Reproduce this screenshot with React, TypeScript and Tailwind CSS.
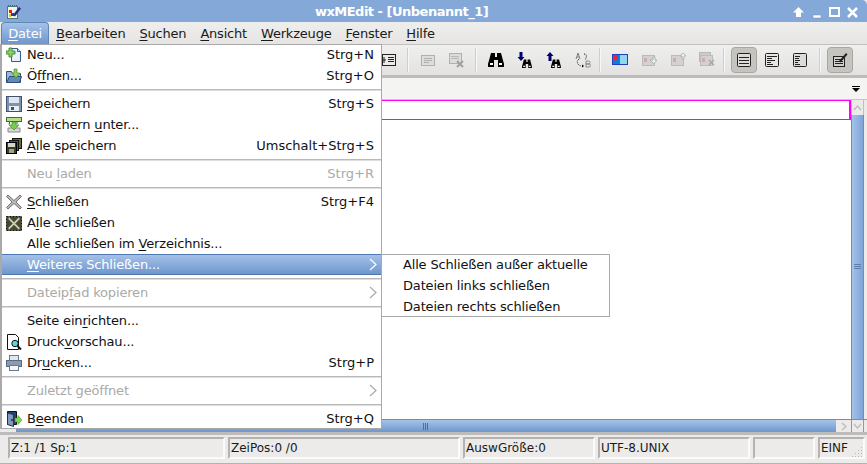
import type { ReactNode } from "react";

type Row =
  | { sep: true }
  | { sep?: false; label: string; u?: number; n?: number; keys?: string; icon?: ReactNode; off?: boolean; arrow?: boolean; on?: boolean };

function Mn({ text, u, n = 1 }: { text: string; u?: number; n?: number }) {
  if (u === undefined) return <span>{text}</span>;
  return (
    <span>
      {text.slice(0, u)}
      <span className="underline underline-offset-2">{text.slice(u, u + n)}</span>
      {text.slice(u + n)}
    </span>
  );
}

function Ico({ children, w = 16, h = 16 }: { children: ReactNode; w?: number; h?: number }) {
  return (
    <svg width={w} height={h} viewBox={`0 0 ${w} ${h}`} className="block shrink-0">
      {children}
    </svg>
  );
}

const NewIcon = (
  <Ico>
    <path d="M5.500 1.500h6l3 3v10h-9z" fill="#e8f0fa" stroke="#2f5f9a" />
    <path d="M11.500 1.500v3h3" fill="#bcd2ee" stroke="#2f5f9a" />
    <path d="M3 1h3v3h3v3H6v3H3V7H0V4h3z" fill="#8fd05a" stroke="#2f7a2a" strokeWidth="0.8" />
  </Ico>
);
const OpenIcon = (
  <Ico>
    <path d="M.5 3.500h5l1 2h8v9H.5z" fill="#9ab8d8" stroke="#2e4f78" />
    <path d="M.5 14.500l3-6h12l-2 6z" fill="#5f8ab8" stroke="#2e4f78" />
    <path d="M8 1h3v4h3l-4 5-4-5h2z" fill="#8fd05a" stroke="#4c8a2c" strokeWidth="0.7" />
  </Ico>
);
const SaveIcon = (
  <Ico>
    <rect x="0.500" y="0.500" width="15" height="15" fill="#7f93ad" stroke="#3f5270" />
    <rect x="3" y="1" width="10" height="6" fill="#dfe6ee" />
    <rect x="3" y="10" width="10" height="5" fill="#e8eef5" />
    <rect x="5" y="11" width="3" height="3" fill="#3f5270" />
  </Ico>
);
const SaveAsIcon = (
  <Ico>
    <rect x="0.500" y="0.500" width="15" height="4" fill="#b4e08a" stroke="#2f7a2a" />
    <path d="M3.500 4v3h-1M11 4v3" stroke="#2f7a2a" fill="none" />
    <path d="M2 11h12v4H2z" fill="#d8d8d8" stroke="#8a8a8a" />
    <path d="M6 5h4v3h3l-5 5-5-5h3z" fill="#7ccb52" stroke="#3f8f2a" strokeWidth="0.7" />
  </Ico>
);
const SaveAllIcon = (
  <Ico>
    <rect x="6.500" y="0.500" width="9" height="10" fill="#6b6b3a" stroke="#111" />
    <rect x="3.500" y="2.500" width="9" height="10" fill="#55552e" stroke="#111" />
    <rect x="0.500" y="4.500" width="10" height="11" fill="#3d3d22" stroke="#000" />
    <rect x="2" y="5" width="7" height="4" fill="#d5d5c8" />
    <rect x="3" y="11" width="5" height="4" fill="#a0a090" />
  </Ico>
);
const CloseIcon = (
  <Ico>
    <path d="M2 1l6 5.500L14 1l1.500 1.500L10 8l5.500 5.500L14 15 8 9.500 2 15 .5 13.500 6 8 .5 2.500z" fill="#b8b8b8" stroke="#5a5a5a" strokeWidth="0.8" />
  </Ico>
);
const CloseAllIcon = (
  <Ico>
    <rect x="0.500" y="1.500" width="15" height="14" fill="#4a4a20" stroke="#111" strokeDasharray="2 1" />
    <path d="M3 2l5 5 5-5 1 2-4.500 4.500L14 13l-1 2-5-5-5 5-1-2 4.500-4.500L2 4z" fill="#c8c8c8" stroke="#555" strokeWidth="0.5" />
  </Ico>
);
const PreviewIcon = (
  <Ico>
    <path d="M1.500.5h8l3 3v12h-11z" fill="#fff" stroke="#111" />
    <circle cx="9" cy="9.500" r="3.200" fill="#5cd6e0" stroke="#111" />
    <path d="M11.500 12l3.500 3.500" stroke="#111" strokeWidth="2" />
  </Ico>
);
const PrintIcon = (
  <Ico>
    <rect x="3.500" y="0.500" width="9" height="5" fill="#e4e8ee" stroke="#6a7a90" />
    <rect x="0.500" y="5.500" width="15" height="6" fill="#8a9ab0" stroke="#5a6a80" />
    <rect x="3.500" y="10.500" width="9" height="5" fill="#f5f5f5" stroke="#6a7a90" />
  </Ico>
);
const ExitIcon = (
  <Ico>
    <path d="M1.500.5h9v13h-9z" fill="#27426a" stroke="#111" />
    <path d="M1.500 2l6 1.500v12l-6-2z" fill="#7a9cc4" stroke="#1c3355" />
    <rect x="5" y="8" width="2" height="2" fill="#a01818" />
    <path d="M9 7h3V4.500L16 9l-4 4.500V11H9z" fill="#83d65a" stroke="#3f8f2a" strokeWidth="0.6" />
  </Ico>
);

const rows: Row[] = [
  { label: "Neu...", keys: "Strg+N", icon: NewIcon },
  { label: "Öffnen...", u: 1, n: 2, keys: "Strg+O", icon: OpenIcon },
  { sep: true },
  { label: "Speichern", u: 0, keys: "Strg+S", icon: SaveIcon },
  { label: "Speichern unter...", u: 10, icon: SaveAsIcon },
  { label: "Alle speichern", u: 0, keys: "Umschalt+Strg+S", icon: SaveAllIcon },
  { sep: true },
  { label: "Neu laden", u: 4, keys: "Strg+R", off: true },
  { sep: true },
  { label: "Schließen", u: 0, keys: "Strg+F4", icon: CloseIcon },
  { label: "Alle schließen", u: 1, icon: CloseAllIcon },
  { label: "Alle schließen im Verzeichnis...", u: 18 },
  { label: "Weiteres Schließen...", u: 0, arrow: true, on: true },
  { sep: true },
  { label: "Dateipfad kopieren", u: 6, arrow: true, off: true },
  { sep: true },
  { label: "Seite einrichten...", u: 9 },
  { label: "Druckvorschau...", u: 5, icon: PreviewIcon },
  { label: "Drucken...", u: 2, keys: "Strg+P", icon: PrintIcon },
  { sep: true },
  { label: "Zuletzt geöffnet", arrow: true, off: true },
  { sep: true },
  { label: "Beenden", u: 1, keys: "Strg+Q", icon: ExitIcon },
];

const menus: [string, number][] = [
  ["Bearbeiten", 0],
  ["Suchen", 0],
  ["Ansicht", 0],
  ["Werkzeuge", 0],
  ["Fenster", 0],
  ["Hilfe", 0],
];

function Binoculars({ x = 0, y = 0, s = 1 }: { x?: number; y?: number; s?: number }) {
  return (
    <g transform={`translate(${x} ${y}) scale(${s})`} fill="#000">
      <path d="M3 1h4v4h2V1h4l3 11v3h-6V8H6v7H0v-3z" />
      <path d="M2 11h3v2H2zM11 11h3v2h-3z" fill="#fff" />
    </g>
  );
}

function Sep() {
  return <div className="w-[2px] h-[24px] bg-[#cfcfcf] border-r border-[#f7f7f7]" />;
}

function ToolBtn({ children, w, on }: { children: ReactNode; w: string; on?: boolean }) {
  return (
    <div
      className={
        on
          ? `${w} flex items-center justify-center h-[26px] rounded-[4px] border border-[#a8a6a0] bg-[#c6c4bf]`
          : `${w} flex items-center justify-center h-[26px]`
      }
    >
      {children}
    </div>
  );
}

function Lines({ lines, fill }: { lines: number[][]; fill: string }) {
  return (
    <Ico>
      <rect x="1.500" y="1.500" width="13" height="13" rx="1" fill={fill} stroke="#222" />
      {lines.map((l, i) => (
        <path key={i} d={`M${l[0]} ${l[2]}.500h${l[1] - l[0]}`} stroke="#222" />
      ))}
    </Ico>
  );
}

function Pane({ children, w }: { children?: ReactNode; w: string }) {
  return (
    <div className={`${w} relative h-[22px] border-2 border-t-[#b4b3b0] border-l-[#b4b3b0] border-b-[#fbfbfb] border-r-[#fbfbfb] bg-[#ecebe9] pl-[1px] flex items-center text-[12px] leading-none text-[#1a1a1a] whitespace-nowrap overflow-hidden`}>
      {children}
    </div>
  );
}

export default function App() {
  return (
    <div className="relative w-[867px] h-[464px] overflow-hidden flex flex-col bg-[#ecebe9] font-['DejaVu_Sans',sans-serif] text-[13px] text-[#111]">
      {/* titlebar */}
      <div className="relative h-[22px] shrink-0 bg-[#84a9d8] rounded-tr-[5px] flex items-center pl-[6px] pr-[7px] pt-[2px]">
        <Ico w={16} h={16}>
          <rect x="1.500" y="2.500" width="10" height="12" fill="#f3f3e6" stroke="#4a7a7a" />
          <path d="M2 1.500h9" stroke="#3a6a7a" strokeDasharray="1 1" />
          <rect x="3" y="6" width="3" height="3" fill="#e02020" />
          <rect x="5" y="9" width="3" height="3" fill="#2040c0" />
          <rect x="3" y="10" width="2" height="3" fill="#e8c020" />
          <path d="M7 11L13 3l2 1.500-6 8z" fill="#2a2a80" />
        </Ico>
        <div className="flex-1 text-center font-bold text-white text-[13px] tracking-[-0.5px] pr-[10px]">wxMEdit - [Unbenannt_1]</div>
        <div className="flex items-center gap-[3px]">
          <Ico w={15} h={15}>
            <path d="M7.500 2l5.500 5.500H10V12H5V7.500H2z" fill="#fff" />
          </Ico>
          <Ico w={15} h={15}>
            <rect x="4" y="10" width="8" height="3" fill="#fff" stroke="#6f8fb8" strokeWidth="0.5" />
          </Ico>
          <Ico w={15} h={15}>
            <rect x="3" y="3" width="9" height="8" fill="none" stroke="#fff" strokeWidth="2" />
          </Ico>
          <Ico w={15} h={15}>
            <path d="M3 3l9 9M12 3l-9 9" stroke="#fff" strokeWidth="2.500" />
          </Ico>
        </div>
      </div>

      {/* menubar */}
      <div className="h-[23px] shrink-0 flex items-center pl-[1px] bg-gradient-to-b from-[#eeeeed] to-[#e6e5e3] border-b border-[#c0c0c0] leading-none tracking-[-0.2px]">
        <div className="w-[48px] h-[22px] flex items-center justify-center rounded-t-[4px] border border-[#5f87b8] border-b-0 bg-gradient-to-b from-[#a4c1e7] to-[#6f97cd] text-white">
          <Mn text="Datei" u={0} />
        </div>
        {menus.map(([m, u]) => (
          <div key={m} className="px-[7px] text-[#1a1a1a] first:ml-[1px]">
            <Mn text={m} u={u} />
          </div>
        ))}
      </div>

      {/* toolbar */}
      <div className="h-[33px] shrink-0 flex items-center pl-[376px] bg-gradient-to-b from-[#efefee] to-[#e3e2e0] border-b-[3px] border-[#bdbcba]">
        <ToolBtn w="w-[26px]">
          <Ico>
            <rect x="1.500" y="2.500" width="13" height="11" fill="#ecebe9" stroke="#222" />
            <path d="M7 5.500h6M7 7.500h6M7 9.500h6M3 5v6M2 8h3" stroke="#222" />
          </Ico>
        </ToolBtn>
        <div className="w-[5px]" />
        <Sep />
        <div className="w-[5px]" />
        <ToolBtn w="w-[28px]">
          <Ico>
            <rect x="1.500" y="3.500" width="13" height="10" fill="#ddd" stroke="#b0b0b0" />
            <path d="M4 6.500h8M4 8.500h8M4 10.500h5" stroke="#b0b0b0" />
          </Ico>
        </ToolBtn>
        <ToolBtn w="w-[28px]">
          <Ico>
            <rect x="1.500" y="1.500" width="12" height="10" fill="#ddd" stroke="#b0b0b0" />
            <path d="M3 4.500h8M3 6.500h8" stroke="#b8b8b8" />
            <path d="M9 9l6 6M15 9l-6 6" stroke="#a0a0a0" strokeWidth="2" />
          </Ico>
        </ToolBtn>
        <div className="w-[5px]" />
        <Sep />
        <div className="w-[4px]" />
        <ToolBtn w="w-[29px]">
          <Ico>
            <Binoculars />
          </Ico>
        </ToolBtn>
        <ToolBtn w="w-[29px]">
          <Ico>
            <path d="M2.500 0h3v5h2l-3.500 4L.5 5h2z" fill="#000070" />
            <Binoculars x={5} y={7} s={0.62} />
          </Ico>
        </ToolBtn>
        <ToolBtn w="w-[29px]">
          <Ico>
            <path d="M2.500 9h3V4h2L4 0 .5 4h2z" fill="#000070" />
            <Binoculars x={5} y={7} s={0.62} />
          </Ico>
        </ToolBtn>
        <ToolBtn w="w-[29px]">
          <Ico>
            <path d="M4 7C1 9 2 13 6 14M9 2c3 0 3 3 1 6" fill="none" stroke="#222" strokeDasharray="1 1" />
            <path d="M7 12.500l2 1.500-2 1.500z" fill="#000" />
            <path d="M1 7l2-6 2 6M2 5h2" fill="none" stroke="#555" strokeWidth="0.7" />
            <path d="M11 9h2.500a1.500 1.500 0 0 1 0 3H11zM11 12h3a1.500 1.500 0 0 1 0 3h-3z" fill="none" stroke="#777" strokeWidth="0.8" />
          </Ico>
        </ToolBtn>
        <div className="w-[2px]" />
        <Sep />
        <div className="w-[4px]" />
        <ToolBtn w="w-[29px]">
          <Ico>
            <rect x="0.500" y="2.500" width="15" height="10" fill="#8fd8f0" stroke="#2040c0" />
            <rect x="1" y="3" width="7" height="9" fill="#0a7fd8" />
            <path d="M2 3h4v6L4 7.500 2 9z" fill="#f02040" />
          </Ico>
        </ToolBtn>
        {[
          "M9 8h3V5h2v3h2l-3 4z",
          "M13 1l3 3h-2v3h-2V4h-2z",
          "M10 8l5 5M15 8l-5 5",
        ].map((d, i) => (
          <ToolBtn key={i} w="w-[29px]">
            <Ico>
              {i === 2 && <rect x="0.500" y="0.500" width="11" height="9" fill="#ccc" stroke="#b8b8b8" />}
              <rect x="1.500" y="3.500" width="12" height="10" fill="#d2d2d2" stroke="#bbb" />
              <path d="M3 6h3v4H3z" fill="#cfaab0" />
              <path d={d} fill="#efefef" stroke="#a8a8a8" strokeWidth={i === 2 ? 1.500 : 0.800} />
            </Ico>
          </ToolBtn>
        ))}
        <div className="w-[2px]" />
        <Sep />
        <div className="w-[6px]" />
        <ToolBtn w="w-[26px]" on>
          <Lines fill="#dcdbd8" lines={[[3, 13, 5], [3, 13, 8], [3, 13, 11]]} />
        </ToolBtn>
        <div className="w-[1px]" />
        <ToolBtn w="w-[28px]">
          <Lines fill="#e6e5e3" lines={[[3, 13, 4], [3, 8, 6], [3, 11, 8], [3, 7, 10], [3, 9, 12]]} />
        </ToolBtn>
        <ToolBtn w="w-[28px]">
          <Lines fill="#dcdbd8" lines={[[3, 8, 4], [3, 7, 6], [3, 8, 8], [3, 6, 10], [3, 8, 12]]} />
        </ToolBtn>
        <div className="w-[5px]" />
        <Sep />
        <div className="w-[6px]" />
        <ToolBtn w="w-[26px]" on>
          <Ico>
            <rect x="1.500" y="4.500" width="11" height="10" fill="#d0cfcc" stroke="#222" />
            <path d="M3 7.500h8M3 9.500h8M3 11.500h8" stroke="#222" />
            <path d="M7 9l7-8 1.500 1.500-7 8z" fill="#222" />
          </Ico>
        </ToolBtn>
      </div>

      {/* tab strip */}
      <div className="h-[22px] shrink-0 bg-[#f4f4f3] border-b border-[#c8c8c8] flex items-center justify-end pr-[7px]">
        <Ico w={8} h={6}>
          <path d="M0 0h8v1H0zM0 2h8L4 6z" fill="#000" />
        </Ico>
      </div>

      {/* editor */}
      <div className="flex-1 min-h-0 flex bg-white">
        <div className="flex-1 min-w-0">
          <div className="h-[20px] border-y border-r-2 border-[#ff00ff]" />
        </div>
        <div className="w-[13px] flex flex-col shrink-0">
          <div className="h-[15px] bg-[#ecebe9] border-x border-[#c0c0c0] flex items-center justify-center">
            <Ico w={9} h={6}>
              <path d="M1 5l3.500-4L8 5" fill="none" stroke="#bbb" strokeWidth="1.300" />
            </Ico>
          </div>
          <div className="flex-1 border-x border-[#6f8fb8] bg-gradient-to-r from-[#a6c3e8] to-[#7ea4d8] flex items-center justify-center">
            <Ico w={7} h={6}>
              <path d="M0 .5h7M0 2.500h7M0 4.500h7" stroke="#5f7fa8" />
            </Ico>
          </div>
        </div>
        <div className="w-[3px] bg-[#ecebe9]" />
      </div>

      {/* horizontal scrollbar */}
      <div className="h-[13px] shrink-0 flex border-t border-[#6f8fb8] bg-white">
        <div className="w-[16px] bg-[#ecebe9]" />
        <div className="flex-1 bg-gradient-to-b from-[#a6c3e8] to-[#6f97cd] flex items-center justify-center">
          <Ico w={6} h={7}>
            <path d="M.5 0v7M2.500 0v7M4.500 0v7" stroke="#4f6f98" />
          </Ico>
        </div>
        <div className="w-[15px] bg-[#ecebe9] flex items-center justify-center">
          <Ico w={6} h={9}>
            <path d="M1 1l4 3.500L1 8" fill="none" stroke="#bbb" strokeWidth="1.300" />
          </Ico>
        </div>
        <div className="w-[13px] bg-[#ecebe9] flex items-center justify-center border-x border-[#8a9ab0]">
          <Ico w={9} h={6}>
            <path d="M1 1l3.500 4L8 1" fill="none" stroke="#bbb" strokeWidth="1.300" />
          </Ico>
        </div>
        <div className="w-[3px] bg-[#ecebe9]" />
      </div>

      {/* status bar */}
      <div className="h-[32px] shrink-0 bg-[#ecebe9] border-t-[3px] border-t-[#bdbcba] border-b border-b-[#9db5d6] flex items-start pt-[2px] pl-[8px] gap-[3px]">
        <Pane w="w-[217px]">Z:1 /1 Sp:1</Pane>
        <Pane w="w-[232px]">ZeiPos:0 /0</Pane>
        <Pane w="w-[132px]">AuswGröße:0</Pane>
        <Pane w="w-[152px]">UTF-8.UNIX</Pane>
        <Pane w="w-[62px]" />
        <Pane w="w-[47px]">
          EINF
          <svg width="12" height="12" viewBox="0 0 12 12" className="absolute right-0 bottom-0">
            <path d="M10 2h1v1h-1zM7 5h1v1H7zM10 5h1v1h-1zM4 8h1v1H4zM7 8h1v1H7zM10 8h1v1h-1zM1 11h1v1H1zM4 11h1v1H4zM7 11h1v1H7zM10 11h1v1h-1z" fill="#b8b8b4" />
          </svg>
        </Pane>
      </div>

      {/* open file menu */}
      <div className="absolute left-0 top-[44px] w-[382px] bg-white border-t border-b border-r border-l-2 border-[#a9a9a9] leading-none">
        <div className="-my-[1px]">
          {rows.map((r, i) =>
            r.sep ? (
              <div key={i} className="h-[7px] flex items-center">
                <div className="h-[2px] w-full bg-[#b9b9b9] border-b border-[#dedede]" />
              </div>
            ) : (
              <div
                key={i}
                className={
                  r.on
                    ? "h-[21px] flex items-center border-y border-[#4f79ae] bg-gradient-to-b from-[#a4c1e7] to-[#6f97cd] text-white"
                    : r.off
                      ? "h-[21px] flex items-center text-[#a9a9a9]"
                      : "h-[21px] flex items-center text-[#111]"
                }
              >
                <div className="w-[25px] pl-[4px] shrink-0">{r.icon}</div>
                <div className="flex-1 whitespace-nowrap tracking-[-0.17px]">
                  <Mn text={r.label} u={r.u} n={r.n} />
                </div>
                {r.keys && <div className="pr-[7px]">{r.keys}</div>}
                {r.arrow && (
                  <div className="pr-[3px]">
                    <Ico w={9} h={13}>
                      <path d="M1 1l6 5.500L1 12" fill="none" stroke={r.on ? "#ffffff" : "#aaaaaa"} strokeWidth="1.200" />
                    </Ico>
                  </div>
                )}
              </div>
            ),
          )}
        </div>
      </div>

      {/* submenu */}
      <div className="absolute left-[381px] top-[254px] w-[229px] bg-white border border-[#a9a9a9] leading-none text-[#111] tracking-[-0.17px]">
        <div className="-my-[1px]">
          {["Alle Schließen außer aktuelle", "Dateien links schließen", "Dateien rechts schließen"].map((s) => (
            <div key={s} className="h-[21px] flex items-center pl-[21px] whitespace-nowrap">
              {s}
            </div>
          ))}
        </div>
      </div>
    </div>
  );
}
